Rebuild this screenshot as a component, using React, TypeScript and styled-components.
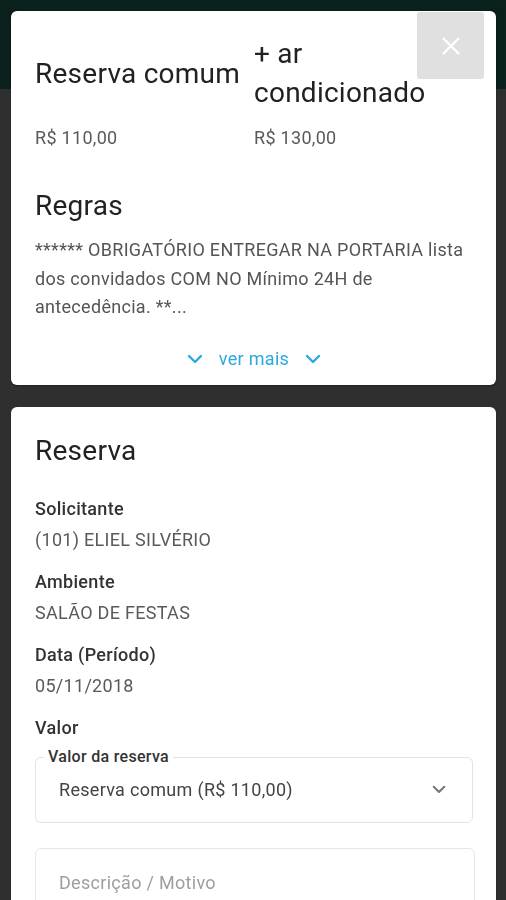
import React from "react";
import styled, { createGlobalStyle } from "styled-components";

const GlobalStyle = createGlobalStyle`
  html, body {
    margin: 0;
    padding: 0;
    height: 100%;
    overflow: hidden;
  }
  body {
    font-family: Roboto, "Noto Sans", "Liberation Sans", sans-serif;
    background: #2f2f2f;
    letter-spacing: 0.3px;
  }
`;

const Page = styled.div`
  height: 900px;
  display: flex;
  flex-direction: column;
  background: #2f2f2f;
`;

const AppBar = styled.div`
  height: 89px;
  background: #0a201c;
  flex-shrink: 0;
`;

const Overlay = styled.div`
  position: fixed;
  inset: 0;
  padding: 11px 10px 11px 11px;
  display: flex;
  flex-direction: column;
  gap: 22px;
  overflow: hidden;
`;

const Card = styled.div<{ $grow?: boolean }>`
  position: relative;
  background: #fff;
  border-radius: 6px;
  padding: 23px 23px 6px 24px;
  box-shadow: 0 1px 2px rgba(0, 0, 0, 0.35);
  flex: ${(p) => (p.$grow ? "1 0 auto" : "0 0 auto")};
  min-height: ${(p) => (p.$grow ? "600px" : "0")};
`;

const CloseButton = styled.button`
  position: absolute;
  top: 1px;
  right: 12px;
  width: 67px;
  height: 67px;
  border: none;
  border-radius: 3px;
  background: #e0e0e0;
  display: flex;
  align-items: center;
  justify-content: center;
  padding: 0;
  cursor: pointer;
`;

const PriceGrid = styled.div`
  display: grid;
  grid-template-columns: 1fr 1fr;
  align-items: center;
`;

const OptionTitle = styled.div`
  font-size: 28px;
  line-height: 39px;
  letter-spacing: 0.25px;
  color: #212121;
`;

const Price = styled.div`
  margin-top: 12px;
  font-size: 18px;
  line-height: 28px;
  color: #5a5a5a;
`;

const Heading = styled.h2<{ $top?: number }>`
  margin: ${(p) => p.$top ?? 0}px 0 0;
  font-size: 28px;
  line-height: 36px;
  font-weight: 400;
  letter-spacing: 0.25px;
  color: #212121;
`;

const Rules = styled.p`
  margin: 12px 0 0;
  font-size: 18px;
  line-height: 28.5px;
  color: #555;
`;

const MoreButton = styled.button`
  margin-top: 17px;
  height: 40px;
  width: 100%;
  border: none;
  background: none;
  display: flex;
  align-items: center;
  justify-content: center;
  gap: 16px;
  font-family: inherit;
  letter-spacing: inherit;
  font-size: 18px;
  color: #2aa8e0;
  padding: 0;
  cursor: pointer;
`;

const Fields = styled.div`
  margin-top: 24px;
  display: flex;
  flex-direction: column;
  gap: 11px;
`;

const Field = styled.div`
  display: flex;
  flex-direction: column;
`;

const Label = styled.div`
  font-size: 18px;
  line-height: 31px;
  font-weight: 500;
  color: #333;
`;

const Value = styled.div`
  font-size: 18px;
  line-height: 31px;
  color: #5a5a5a;
`;

const Outlined = styled.div`
  position: relative;
  margin-top: 14px;
  height: 66px;
  box-sizing: border-box;
  border: 1px solid #e3e3e3;
  border-radius: 6px;
  display: flex;
  align-items: center;
  justify-content: space-between;
  padding: 0 26px 0 23px;
`;

const Legend = styled.span`
  position: absolute;
  top: -11px;
  left: 8px;
  padding: 0 4px;
  background: #fff;
  font-size: 16px;
  line-height: 20px;
  font-weight: 500;
  color: #333;
`;

const SelectValue = styled.span`
  font-size: 18px;
  color: #444;
`;

const TextArea = styled.div`
  margin: 25px -2px 0 0;
  height: 160px;
  box-sizing: border-box;
  border: 1px solid #e6e6e6;
  border-radius: 6px;
  padding: 20px 23px;
  font-size: 18px;
  line-height: 28px;
  color: #9e9e9e;
`;

const Chevron = ({ color, w = 16 }: { color: string; w?: number }) => (
  <svg width={w} height={w * 0.625} viewBox="0 0 16 10" fill="none">
    <polyline
      points="2,2 8,8 14,2"
      stroke={color}
      strokeWidth="2.4"
      strokeLinecap="round"
      strokeLinejoin="round"
    />
  </svg>
);

const App = (): JSX.Element => {
  return (
    <>
      <GlobalStyle />
      <Page>
        <AppBar />
      </Page>
      <Overlay>
        <Card>
          <CloseButton aria-label="fechar">
            <svg width="20" height="20" viewBox="0 0 20 20">
              <path
                d="M2 2 L18 18 M18 2 L2 18"
                stroke="#fff"
                strokeWidth="2.4"
              />
            </svg>
          </CloseButton>
          <PriceGrid>
            <OptionTitle>Reserva comum</OptionTitle>
            <OptionTitle>+ ar condicionado</OptionTitle>
            <Price>R$ 110,00</Price>
            <Price>R$ 130,00</Price>
          </PriceGrid>
          <Heading $top={36}>Regras</Heading>
          <Rules>
            ****** OBRIGATÓRIO ENTREGAR NA PORTARIA lista dos convidados COM
            NO Mínimo 24H de antecedência. **...
          </Rules>
          <MoreButton>
            <Chevron color="#2aa8e0" />
            ver mais
            <Chevron color="#2aa8e0" />
          </MoreButton>
        </Card>
        <Card $grow>
          <Heading $top={3}>Reserva</Heading>
          <Fields>
            <Field>
              <Label>Solicitante</Label>
              <Value>(101) ELIEL SILVÉRIO</Value>
            </Field>
            <Field>
              <Label>Ambiente</Label>
              <Value>SALÃO DE FESTAS</Value>
            </Field>
            <Field>
              <Label>Data (Período)</Label>
              <Value>05/11/2018</Value>
            </Field>
            <Field>
              <Label>Valor</Label>
            </Field>
          </Fields>
          <Outlined>
            <Legend>Valor da reserva</Legend>
            <SelectValue>Reserva comum (R$ 110,00)</SelectValue>
            <Chevron color="#777" w={14} />
          </Outlined>
          <TextArea>Descrição / Motivo</TextArea>
        </Card>
      </Overlay>
    </>
  );
};

export default App;
